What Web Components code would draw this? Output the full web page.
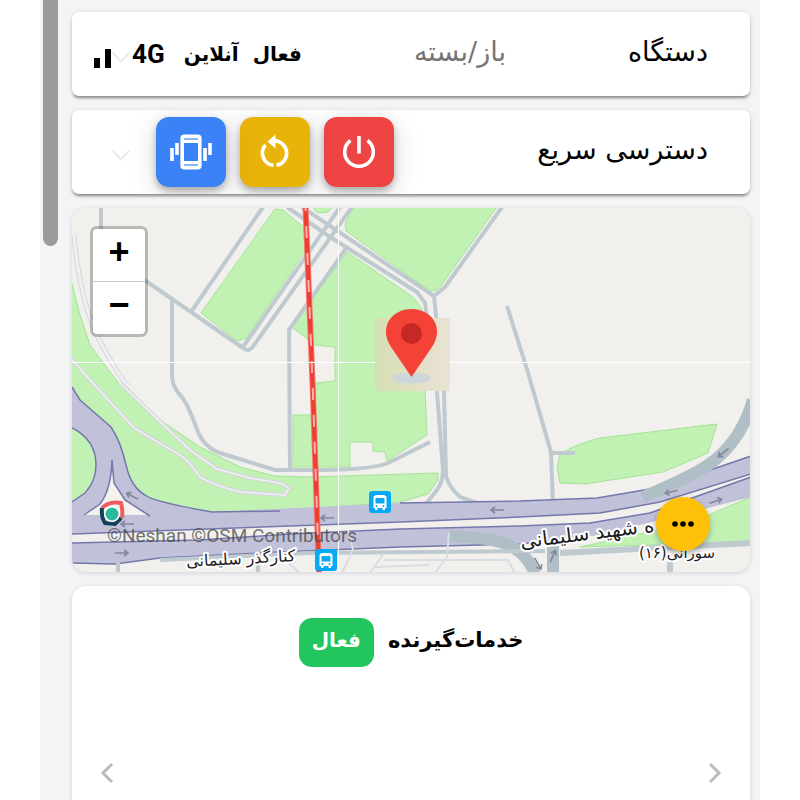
<!DOCTYPE html>
<html lang="fa" dir="rtl">
<head>
<meta charset="utf-8">
<title>دستگاه</title>
<style>
body{margin:0;background:#fff;font-family:"DejaVu Sans","Noto Sans",sans-serif;color:#000}
</style>
</head>
<body>
<app-shell>
  <device-row>
    <span slot="title">دستگاه</span>
    <span slot="hint">باز/بسته</span>
    <signal-status>
      <span>فعال</span><span>آنلاین</span>
      <span slot="network">4G</span>
    </signal-status>
  </device-row>
  <device-row class="quick">
    <span slot="title">دسترسی سریع</span>
    <action-button label="خاموش" icon="power" style="--bg:#ef4444"></action-button>
    <action-button label="راه‌اندازی مجدد" icon="restart" style="--bg:#e9b30a"></action-button>
    <action-button label="لرزش" icon="vibrate" style="--bg:#3b82f6"></action-button>
  </device-row>
  <map-view></map-view>
  <service-panel>
    <span slot="title">خدمات‌گیرنده</span>
    <span slot="badge">فعال</span>
  </service-panel>
</app-shell>

<script>
const define = (name, html, setup) => customElements.define(name, class extends HTMLElement {
  constructor() {
    super();
    this.attachShadow({mode: 'open'}).innerHTML = html;
  }
  connectedCallback() { if (setup) setup(this, this.shadowRoot); }
});

define('app-shell', `
<style>
:host{display:flex;direction:ltr;gap:14px;height:100vh;overflow:hidden;box-sizing:border-box;margin:0 40px;padding:0 10px 0 3px;background:#f4f4f7}
.thumb{flex:none;width:15px;height:246px;border-radius:0 0 8px 8px;background:#9b9b9d}
main{direction:rtl;flex:1;min-width:0;display:flex;flex-direction:column;gap:14px;padding-top:12px}
</style>
<div class="thumb"></div><main><slot></slot></main>`);

define('device-row', `
<style>
:host{position:relative;flex:none;display:flex;align-items:center;height:84px;box-sizing:border-box;padding:0 42px 0 22px;border-radius:7px;background:#fff;box-shadow:0 3px 3px -1px rgba(0,0,0,.38),0 1px 5px rgba(0,0,0,.14);overflow:hidden}
:host(.quick){padding-left:84px}
h2,.hint{margin:0;padding-bottom:4px;font-size:27px;line-height:36px;font-weight:400;white-space:nowrap}
h2{flex:0 0 202px}
.hint{color:#757575}
.actions{position:relative;display:flex;gap:14px;margin-inline-start:auto}
.expand{position:absolute;left:38px;top:34px;width:22px;height:22px;padding:0;border:0;background:none}
svg{display:block}
</style>
<button class="expand" aria-label="باز کردن"><svg width="22" height="22" viewBox="0 0 22 22"><path d="M2.500 6.500 11 15.500 19.500 6.500" fill="none" stroke="#ececee" stroke-width="2.500"/></svg></button>
<h2><slot name="title"></slot></h2>
<div class="hint"><slot name="hint"></slot></div>
<div class="actions"><slot></slot></div>`);

define('signal-status', `
<style>
:host{display:flex;align-items:center;gap:14px;font-size:20px;line-height:32px;font-weight:700;white-space:nowrap}
.net{display:flex;align-items:center;gap:20px;margin-inline-start:5px;font-family:Roboto,sans-serif;font-size:26px}
svg{display:block;margin-top:8px}
</style>
<slot></slot>
<span class="net"><slot name="network"></slot><svg width="18" height="20" viewBox="0 0 18 20"><path d="M0 10h6v10H0zM11 1h6v19h-6z"/></svg></span>`);

const icons = {
  power: '<path d="M21 5v17.500M12.500 9.500a14.300 14.300 0 1 0 17 0" fill="none" stroke="#fff" stroke-width="3.600"/>',
  restart: '<path d="M11.500 14A12.300 12.300 0 0 0 19.500 34.300M22.500 34.300A12.300 12.300 0 0 0 21 9.900" fill="none" stroke="#fff" stroke-width="3.600"/><path d="M21.500 3.500v14l-8-7z" fill="#fff"/>',
  vibrate: '<rect x="12.200" y="5.200" width="17.600" height="31.600" rx="2" fill="none" stroke="#fff" stroke-width="3.600"/><path d="M13 6h16v6H13zM13 30h16v6H13z" fill="#fff"/><path d="M14 8h14M14 34h14" stroke="#8db5fa" stroke-width="2"/><path d="M2 17v13M7 12v12M35 17v13M40 12v12" stroke="#fff" stroke-width="3.600"/>'
};
define('action-button', `
<style>
:host{display:block}
button{display:grid;place-items:center;width:70px;height:70px;padding:0;border:0;border-radius:13px;background:var(--bg);box-shadow:0 4px 7px rgba(0,0,0,.26),0 6px 28px rgba(0,0,0,.15)}
</style>
<button><svg width="42" height="42" viewBox="0 0 42 42"></svg></button>`, (el, root) => {
  root.querySelector('button').setAttribute('aria-label', el.getAttribute('label'));
  root.querySelector('svg').innerHTML = icons[el.getAttribute('icon')];
});

define('map-view', `
<style>
:host{position:relative;flex:none;display:block;direction:ltr;aspect-ratio:678/364;border-radius:14px;overflow:hidden;background:#f1f0ec;box-shadow:0 1px 5px rgba(0,0,0,.14)}
.map{display:block;width:100%;height:100%}
.zoom{position:absolute;left:18px;top:18px;display:grid;gap:1px;border:3px solid rgba(0,0,0,.23);border-radius:7px;background:#ccc;background-clip:padding-box;overflow:hidden}
.zoom button{width:52px;height:52px;padding:0;border:0;background:#fff;font:700 36px/52px "Liberation Mono",monospace;color:#000}
.credit{position:absolute;left:35px;bottom:24px;font:19px/24px Roboto,sans-serif;color:rgba(70,70,70,.75);white-space:nowrap}
.more{position:absolute;right:40px;bottom:21px;display:grid;place-items:center;width:54px;height:54px;padding:0;border:0;border-radius:50%;background:#ffc107;box-shadow:0 3px 6px rgba(0,0,0,.3)}
.green{fill:#c2f1b4;stroke:#a4e495;stroke-width:1}
.road{fill:none;stroke:#bfcad0;stroke-width:4;stroke-linejoin:round}
.road.main{stroke-width:6}
.wide{fill:none;stroke:#b0bfc6;stroke-width:12}
.hw{fill:#c1c1da}
.edge{fill:none;stroke:#7478ac;stroke-width:1.500}
.arrow{fill:none;stroke:#85859c;stroke-width:1.600}
text{font-family:"DejaVu Sans",sans-serif;fill:#1c1c22;stroke:#fff;stroke-width:4px;paint-order:stroke;stroke-linejoin:round;direction:rtl;text-anchor:middle}
</style>
<svg class="map" viewBox="72 208 678 364" preserveAspectRatio="xMidYMid slice">
  <defs>
    <linearGradient id="tile"><stop offset="0" stop-color="#d6dfb4"/><stop offset=".6" stop-color="#e3dfc8"/><stop offset="1" stop-color="#e9e3d3"/></linearGradient>
    <g id="bus"><rect width="22" height="22" rx="3" fill="#08a9f4"/><path d="M4.500 6.500Q4.500 4 8 4h6q3.500 0 3.500 2.500V17h-1.500v2h-2.500v-2h-5v2H6v-2H4.500z" fill="#fff"/><path d="M6.500 7h9v5.500h-9z" fill="#08a9f4"/><circle cx="7.500" cy="15" r="1" fill="#08a9f4"/><circle cx="14.500" cy="15" r="1" fill="#08a9f4"/></g>
    <path id="arr" class="arrow" d="M7 0H-6M-2-3-6 0-2 3"/>
    <path id="track" d="M71 358 90 380 133 427Q145 435 180 455 188 460 200 477 215 486 240 492L285 495 289 488 280 483 250 478 217 469 190 450 150 412 120 383" fill="none"/>
    <path id="lane" d="M74 235Q80 305 102 345T130 387" fill="none"/>
  </defs>
  <path class="green" d="M71 280 80 315 90 345 120 385 160 420 200 447 240 467 275 476 310 477 438 473 438 480 428 494 400 502 300 509 210 513 60 520V280z"/>
  <path class="green" d="M275 209 283 210 306 229V250L246 338 237 341 201 313z"/>
  <path class="green" d="M353 207H497L443 283Q438 292 430 291L346 231 345 224zM312 207H333L328 212 318 213z"/>
  <path class="green" d="M347 252 410 295Q420 302 425 318V390L427 435 387 461 385 452 373 451V442H350V467H293V415H315L316 383 335 381V347L315 345 292 327z"/>
  <path class="green" d="M557 467 560 455Q570 446 600 438L717 424 708 453 663 472 585 484 560 483z"/>
  <path class="green" d="M580 547 690 523 751 497V542z"/>
  <use href="#lane" stroke="#d4d6df" stroke-width="5"/><use href="#lane" stroke="#f0f0ef" stroke-width="3"/>
  <use href="#track" stroke="#d3d5dc" stroke-width="4"/><use href="#track" stroke="#edeeee" stroke-width="2"/>
  <g class="road">
    <path d="M101 207V240M140 277 191 312 243 348Q249 353 254 345L352 207M191 312 263 207M243 347 340 207M172 301V377Q173 388 181 396 187 402 198 432 203 445 217 452L275 470H330Q372 469 388 463L430 442M290 469 289 330 347 247"/>
    <path d="M287 207 330 237 417 292 425 303 437 392 443 470Q443 482 437 490L425 505M302 207 434 296 444 392 446 476Q449 487 460 497L477 503M434 296 445 287 502 207M507 306 526 366 551 452 553 505M551 453H575"/>
  </g>
  <path class="hw" d="M72 387 80 400 111 427Q121 442 126 465 131 487 145 495 154 502 212 512L400 503 520 501 597 498 650 489 690 477 751 456V474L660 502 600 513 520 517 290 526 72 534V502L85 493Q96 481 96 465 96 440 72 428z"/>
  <path class="edge" d="M72 387 80 400 111 427Q121 442 126 465 131 487 145 495 154 502 212 512L280 511M400 503 520 501 597 498 650 489 690 477 751 456M72 534 290 526 400 522 520 517 600 513 660 502 751 474M72 428Q96 440 96 465 96 481 85 493L72 502"/>
  <path d="M112 470 114 483 125 500 148 515H84L100 504Q111 490 112 470z" fill="#f3f2ed"/>
  <path class="edge" d="M84 515 100 504Q111 490 112 460L114 483 125 500 150 516"/>
  <path class="hw" d="M71 543 200 540 290 534 400 529 520 526 590 523 650 513 751 477V497L700 510 600 535 520 544 400 547 280 552 160 558 115 564 71 563z"/>
  <path class="edge" d="M71 543 200 540 290 534 400 529 520 526 590 523 650 513 751 477M71 563 115 564 160 558 280 552 400 547 520 544 580 538"/>
  <path class="wide" d="M753 400Q742 438 715 460 698 474 643 497"/>
  <path class="wide" d="M450 536Q500 538 514 548 530 558 535 575"/>
  <path class="wide" d="M553 546V573"/>
  <path class="road main" d="M560 553 751 543M670 562V573"/>
  <path class="road" d="M118 562V573M258 554V573M160 560 310 553 545 551"/>
  <g fill="none" stroke="#d9dde0" stroke-width="2"><path d="M348 530 353 550 342 573M449 533 447 557 435 573M384 553 370 573M384 560H508L515 573M375 567 430 565M285 560 300 573"/></g>
  <use href="#arr" x="327" y="518"/><use href="#arr" x="497" y="510"/><use href="#arr" x="127" y="524"/>
  <use href="#arr" transform="translate(132 496) rotate(28)"/><use href="#arr" transform="translate(122 553) rotate(180)"/>
  <use href="#arr" transform="translate(671 492) rotate(-12)"/><use href="#arr" transform="translate(723 453) rotate(-38)"/><use href="#arr" transform="translate(716 501) rotate(162)"/><use href="#arr" transform="translate(538 564) rotate(-120)"/><use href="#arr" transform="translate(553 556) rotate(115)"/>
  <path d="M305.500 207 313 395 319 573" fill="none" stroke="#f5726b" stroke-width="6"/>
  <path d="M305.500 207 313 395 319 573" fill="none" stroke="#f03d32" stroke-width="4"/>
  <path d="M305.500 207 313 395 319 573" fill="none" stroke="#fbb5ae" stroke-width="2" stroke-dasharray="12 15" stroke-dashoffset="8"/>
  <path d="M338.500 208V572M72 362.500H750" stroke="#fff" stroke-width="1"/>
  <use href="#bus" x="369" y="491"/><use href="#bus" x="315" y="549"/>
  <g fill="none" stroke-width="4"><path d="M102 508Q109 501 121 503 123 511 122 518" stroke="#ee5c61"/><path d="M102 508Q101 517 105 523L115 524 121 518" stroke="#153f58"/></g>
  <circle cx="112" cy="514" r="8" fill="#fff"/><circle cx="112" cy="514" r="6.500" fill="#2bb99c"/>
  <text font-size="20" transform="translate(588 540) rotate(-7)">ه شهید سلیمانی</text>
  <text font-size="16" transform="translate(241 564) rotate(-3)">کنارگذر سلیمانی</text>
  <text font-size="15" x="677" y="558">سورانی(۱۶)</text>
  <rect x="375" y="318" width="75" height="73" fill="url(#tile)"/>
  <ellipse cx="411.500" cy="378" rx="19.500" ry="5.500" fill="#cdd6d9"/>
  <path d="M411.500 377 391 347C378 327 392 309 411.500 309S445 327 432 347z" fill="#f44336"/>
  <circle cx="411.500" cy="333.500" r="10.500" fill="#c62828"/>
</svg>
<div class="zoom"><button aria-label="بزرگ‌نمایی">+</button><button aria-label="کوچک‌نمایی">−</button></div>
<div class="credit">©Neshan ©OSM Contributors</div>
<button class="more" aria-label="بیشتر"><svg width="24" height="8" viewBox="0 0 24 8"><circle cx="4" cy="4" r="2.800"/><circle cx="12" cy="4" r="2.800"/><circle cx="20" cy="4" r="2.800"/></svg></button>`);

define('service-panel', `
<style>
:host{flex:1 0 240px;display:flex;flex-direction:column;box-sizing:border-box;background:#fff;border-radius:14px 14px 0 0;box-shadow:0 1px 5px rgba(0,0,0,.14);padding:32px 24px 0}
header{display:flex;justify-content:center;gap:14px;font-size:21px;line-height:32px;font-weight:700;white-space:nowrap}
h2{margin:6px 0 0;font:inherit}
.badge{box-sizing:border-box;height:49px;padding:6px 13px 0;border-radius:13px;background:#22c55e;color:#fff;font-size:20px}
nav{display:flex;justify-content:space-between;margin-top:95px}
button{width:22px;height:22px;padding:0;border:0;background:none}
svg{display:block}
path{fill:none;stroke:#bcbcbc;stroke-width:3}
</style>
<header><h2><slot name="title"></slot></h2><span class="badge"><slot name="badge"></slot></span></header>
<nav>
<button aria-label="قبلی"><svg width="22" height="22" viewBox="0 0 22 22"><path d="M6 2 15 11 6 20"/></svg></button>
<button aria-label="بعدی"><svg width="22" height="22" viewBox="0 0 22 22"><path d="M16 2 7 11 16 20"/></svg></button>
</nav>`);
</script>
</body>
</html>
